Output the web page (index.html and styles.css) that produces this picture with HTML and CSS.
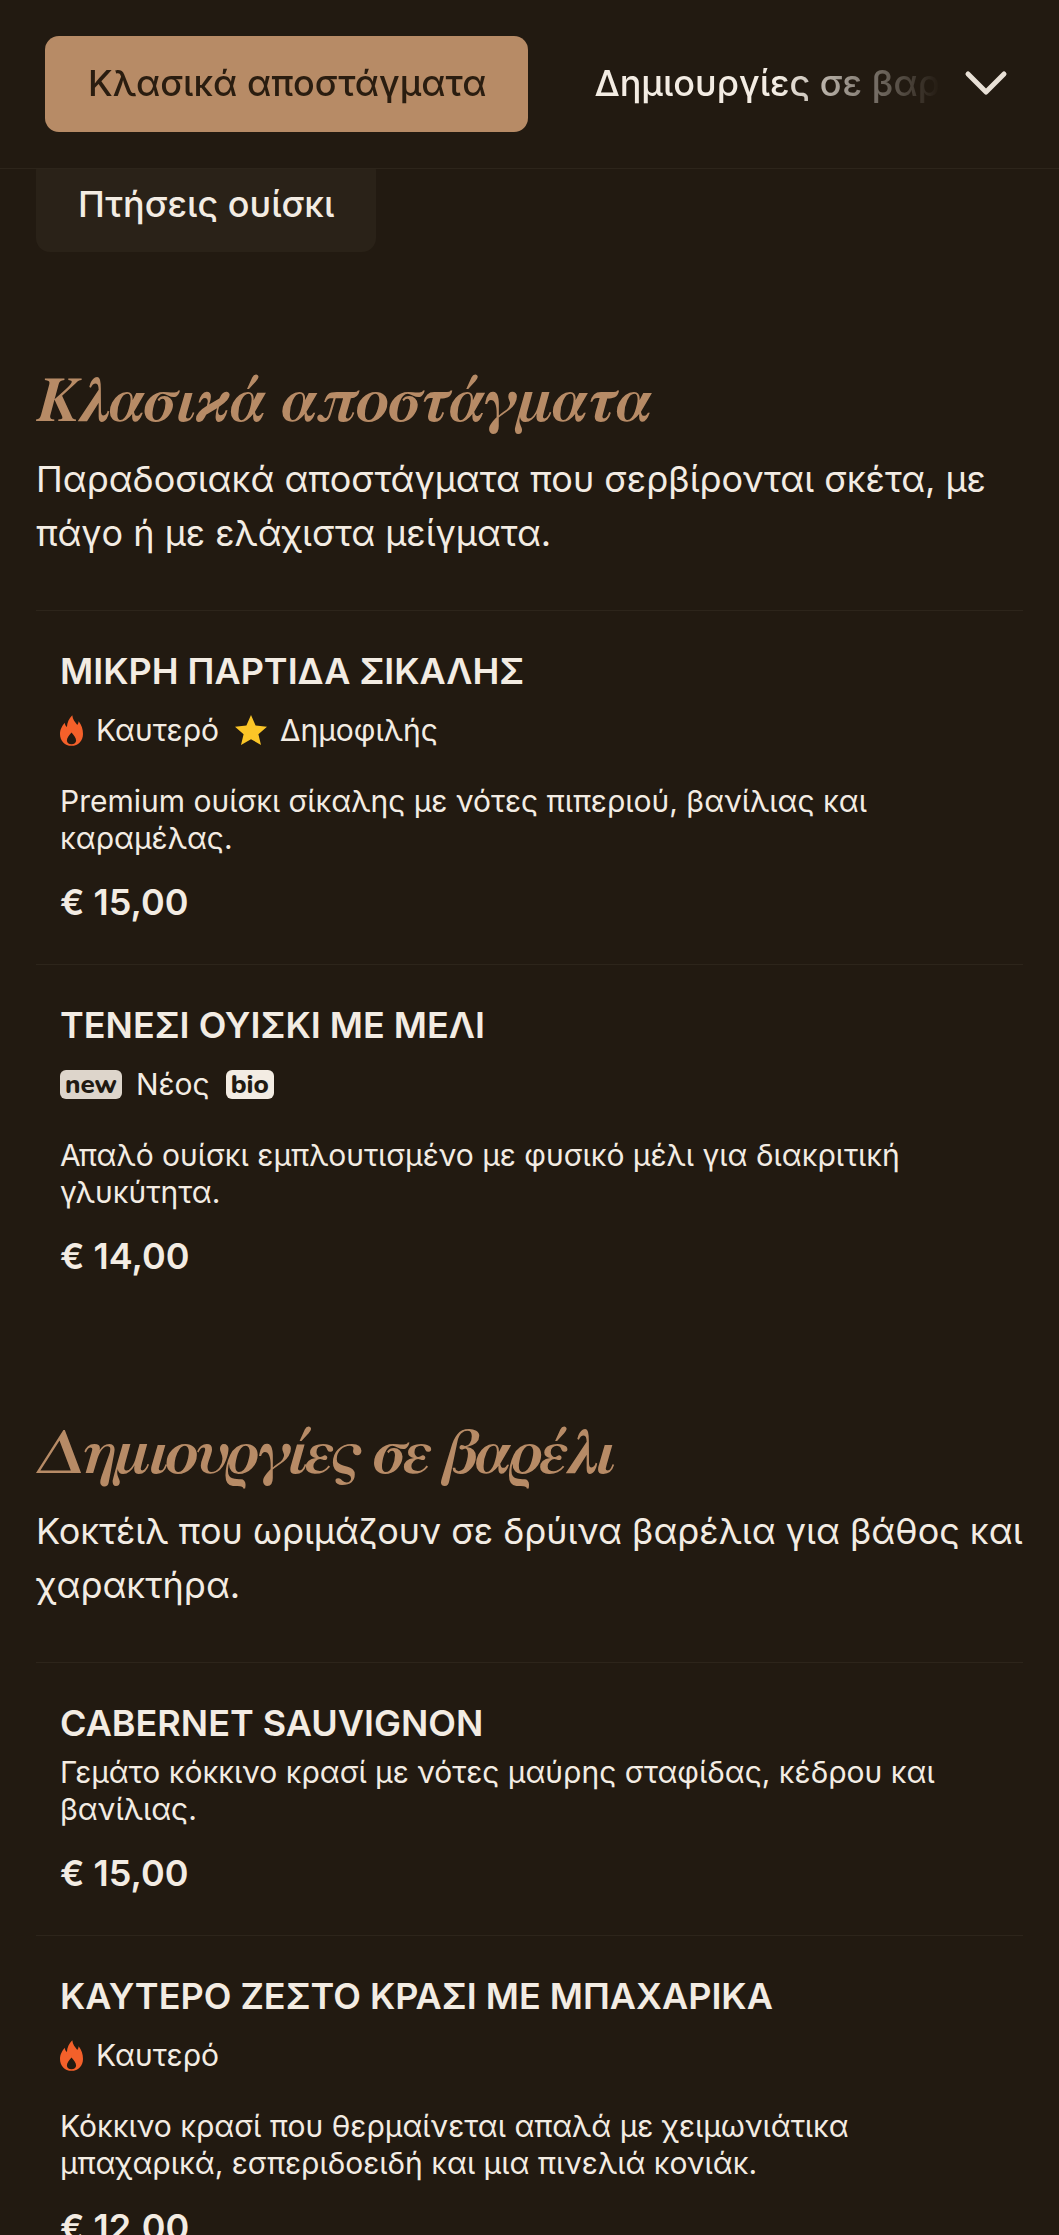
FILE: index.html
```html
<!DOCTYPE html>
<html lang="el">
<head>
<meta charset="utf-8">
<title>Μενού</title>
<link rel="stylesheet" href="styles.css">
</head>
<body>
<svg class="defs" width="0" height="0" aria-hidden="true">
  <defs>
    <symbol id="flame" viewBox="0 0 24 32">
      <path d="M12.800 0c.4 4.600 3 7 5.200 10.200.9-1.100 1.400-2.400 1.500-3.900C22.600 10.200 24 14.800 24 19.600 24 26.800 19 32 12 32S0 26.800 0 19.600C0 14.400 2.600 11 4.800 7.800c.4 1.900 1.100 3.400 2.400 4.500C7.400 7.400 9.600 3.400 12.800 0zM12 18c-2.400 3-4.800 5.200-4.800 8.400 0 2.200 2 3.900 4.800 3.900s4.800-1.700 4.800-3.900c0-3.200-2.400-5.400-4.800-8.400z" fill="#f4602a" fill-rule="evenodd"/>
    </symbol>
    <symbol id="star" viewBox="0 0 32 30">
      <path d="M16 0l4.600 10.600L32 11.700l-8.600 7.600L26 30l-10-5.800L6 30l2.600-10.700L0 11.700l11.400-1.100z" fill="#fbc527"/>
    </symbol>
  </defs>
</svg>
<header class="topbar">
  <nav class="tabs">
    <a class="tab tab-active">Κλασικά αποστάγματα</a>
    <a class="tab tab-fade">Δημιουργίες σε βαρέλι</a>
  </nav>
  <svg class="chevron" width="44" height="28" viewBox="0 0 44 28" aria-hidden="true"><path d="M4 5l18 18L40 5" fill="none" stroke="#e8e0d6" stroke-width="5" stroke-linecap="round" stroke-linejoin="round"/></svg>
</header>
<main class="page">
  <div class="chips"><a class="chip">Πτήσεις ουίσκι</a></div>

  <section class="section">
    <h2 class="section-title">Κλασικά αποστάγματα</h2>
    <p class="section-desc">Παραδοσιακά αποστάγματα που σερβίρονται σκέτα, με πάγο ή με ελάχιστα μείγματα.</p>
    <ul class="items">
      <li class="item">
        <h3 class="item-name">ΜΙΚΡΗ ΠΑΡΤΙΔΑ ΣΙΚΑΛΗΣ</h3>
        <div class="tags">
          <svg class="icon-flame"><use href="#flame"/></svg><span class="tag">Καυτερό</span>
          <svg class="icon-star"><use href="#star"/></svg><span class="tag">Δημοφιλής</span>
        </div>
        <p class="item-desc">Premium ουίσκι σίκαλης με νότες πιπεριού, βανίλιας και καραμέλας.</p>
        <p class="price">€ 15,00</p>
      </li>
      <li class="item">
        <h3 class="item-name">ΤΕΝΕΣΙ ΟΥΙΣΚΙ ΜΕ ΜΕΛΙ</h3>
        <div class="tags">
          <span class="badge badge-new">new</span><span class="tag">Νέος</span>
          <span class="badge badge-bio">bio</span>
        </div>
        <p class="item-desc">Απαλό ουίσκι εμπλουτισμένο με φυσικό μέλι για διακριτική γλυκύτητα.</p>
        <p class="price">€ 14,00</p>
      </li>
    </ul>
  </section>

  <section class="section">
    <h2 class="section-title section-title-narrow">Δημιουργίες σε βαρέλι</h2>
    <p class="section-desc">Κοκτέιλ που ωριμάζουν σε δρύινα βαρέλια για βάθος και χαρακτήρα.</p>
    <ul class="items">
      <li class="item">
        <h3 class="item-name">CABERNET SAUVIGNON</h3>
        <p class="item-desc item-desc-tight">Γεμάτο κόκκινο κρασί με νότες μαύρης σταφίδας, κέδρου και βανίλιας.</p>
        <p class="price">€ 15,00</p>
      </li>
      <li class="item">
        <h3 class="item-name">ΚΑΥΤΕΡΟ ΖΕΣΤΟ ΚΡΑΣΙ ΜΕ ΜΠΑΧΑΡΙΚΑ</h3>
        <div class="tags">
          <svg class="icon-flame"><use href="#flame"/></svg><span class="tag">Καυτερό</span>
        </div>
        <p class="item-desc">Κόκκινο κρασί που θερμαίνεται απαλά με χειμωνιάτικα μπαχαρικά, εσπεριδοειδή και μια πινελιά κονιάκ.</p>
        <p class="price">€ 12,00</p>
      </li>
    </ul>
  </section>
</main>
</body>
</html>
```
FILE: styles.css
```css
* { box-sizing: border-box; }
html, body { margin: 0; height: 2235px; overflow: hidden; background: #221a11; }
body { font-family: Inter, "Noto Sans", sans-serif; color: #f3ece3; }
.defs { position: absolute; }
p, h2, h3, ul { margin: 0; padding: 0; }
ul { list-style: none; }

.topbar { position: relative; z-index: 2; height: 169px; display: flex; align-items: flex-start; background: #221a11; border-bottom: 1px solid #2d251b; padding: 36px 51px 0 45px; }
.tabs { flex: 1; min-width: 0; display: flex; gap: 66px; overflow: hidden; white-space: nowrap; -webkit-mask-image: linear-gradient(90deg, #000 0, #000 82%, transparent 100%); mask-image: linear-gradient(90deg, #000 0, #000 82%, transparent 100%); margin-right: 24px; }
.tab { font-size: 36px; font-weight: 500; line-height: 94px; height: 96px; flex: none; }
.tab-active { background: #b78b66; color: #2a1d10; padding: 0 42px 0 43px; border-radius: 14px; }
.chevron { flex: none; margin-top: 33px; }

.page { padding: 0 36px; }
.chips { margin-top: -13px; }
.chip { display: inline-block; font-size: 36px; font-weight: 500; line-height: 96px; padding: 0 42px; background: #2a2218; border-radius: 14px; }

.section { margin-top: 111px; }
.section + .section { margin-top: 97px; }
.section-title { font-family: FreeSerif, "Liberation Serif", serif; font-style: italic; font-weight: 700; font-size: 63px; line-height: 80px; color: #b78b66; }
.section-title-narrow { letter-spacing: -2px; }
.section-desc { font-size: 36px; line-height: 54px; margin-top: 9px; }
.items { margin-top: 50px; }
.item { border-top: 1px solid #2d251b; padding: 38px 24px 40px; }
.item-name { font-size: 36px; font-weight: 600; line-height: 44px; }
.tags { display: flex; align-items: center; margin-top: 19px; height: 36px; font-size: 30px; }
.tag { margin-right: 16px; }
.icon-flame { width: 23px; height: 31px; margin-right: 13px; }
.icon-star { width: 32px; height: 30px; margin-right: 13px; }
.badge { font-family: Nunito, Lato, sans-serif; font-weight: 800; color: #211a12; border-radius: 6px; padding: 0 5px; line-height: 29px; font-size: 26px; margin-right: 14px; }
.badge-new { background: #ddd5cb; }
.badge-bio { background: #f3ece3; }
.item-desc { font-size: 30px; line-height: 37px; margin-top: 35px; }
.item-desc-tight { margin-top: 9px; }
.price { font-size: 36px; font-weight: 600; line-height: 44px; margin-top: 23px; }
```
